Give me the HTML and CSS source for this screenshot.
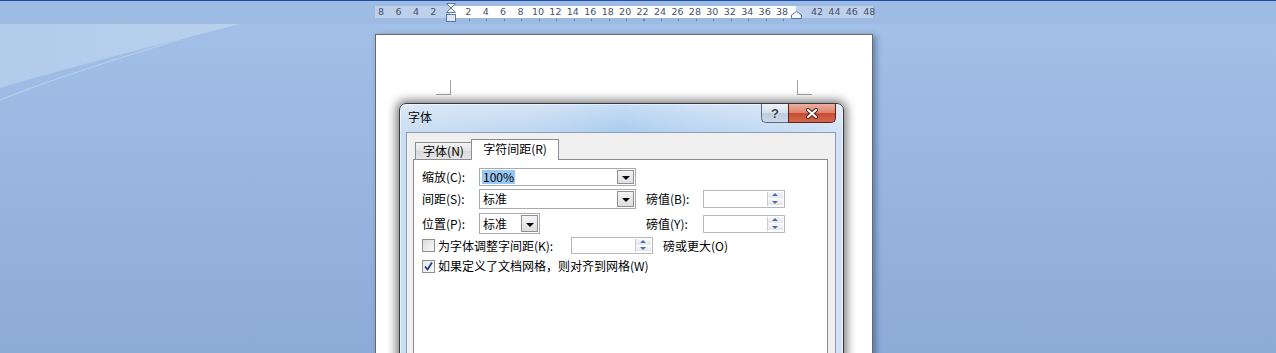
FILE: index.html
```html
<!doctype html>
<html>

<head>
	<meta charset="utf-8">
	<title>字体</title>
	<link rel="stylesheet" href="styles.css">
</head>

<body>
	<div class="topline"></div>

	<!--ルーラー-->
	<div class="rulerband">
		<div class="ruler">
			<div class="scale">
				<span>8</span><span>6</span><span>4</span><span>2</span><span></span>
				<span>2</span><span>4</span><span>6</span><span>8</span><span>10</span>
				<span>12</span><span>14</span><span>16</span><span>18</span><span>20</span>
				<span>22</span><span>24</span><span>26</span><span>28</span><span>30</span>
				<span>32</span><span>34</span><span>36</span><span>38</span><span></span>
				<span>42</span><span>44</span><span>46</span><span>48</span>
			</div>
			<svg class="indent-left" width="11" height="21" viewBox="0 0 11 21">
				<path d="M0.5 0.5 H9.5 L5 5 L9.5 9.5 H0.5 L5 5 Z" fill="#f4f7fc" stroke="#5878aa"/>
				<rect x="0.5" y="11.5" width="9" height="7" fill="#dfe7f4" stroke="#5878aa"/>
			</svg>
			<svg class="indent-right" width="12" height="8" viewBox="0 0 12 8">
				<path d="M0.5 7.5 V4 L5.5 0.5 L10.5 4 V7.5 Z" fill="#f4f7fc" stroke="#5878aa"/>
			</svg>
		</div>
		<div class="ticks"></div>
	</div>

	<div class="workspace">
		<svg class="swoosh" width="260" height="110" viewBox="0 0 260 110">
			<defs>
				<linearGradient id="sw" x1="0" y1="0" x2="1" y2="0">
					<stop offset="0" stop-color="#b2cbea"/>
					<stop offset="1" stop-color="#b8d0ee"/>
				</linearGradient>
			</defs>
			<path d="M0 0 H240 C170 18 80 40 0 64 Z" fill="url(#sw)"/>
			<path d="M188 13 C120 34 60 52 0 76" fill="none" stroke="#b7cfed" stroke-width="1.2" opacity="0.8"/>
		</svg>

		<!--ページ-->
		<div class="page">
			<div class="crops">
				<span class="crop crop-l"></span>
				<span class="crop crop-r"></span>
			</div>
		</div>

		<!--ダイアログ-->
		<div class="dialog">
			<div class="titlebar">
				<div class="title">字体</div>
				<div class="caption-btns">
					<div class="cbtn help">?</div>
					<div class="cbtn close">
						<svg width="14" height="11" viewBox="0 0 14 11">
							<path d="M3 2 L11 9 M11 2 L3 9" stroke="#4a1a12" stroke-width="4" stroke-linecap="round"/>
							<path d="M3 2 L11 9 M11 2 L3 9" stroke="#fff" stroke-width="2.2" stroke-linecap="round"/>
						</svg>
					</div>
				</div>
			</div>

			<div class="client">
				<div class="tabs">
					<div class="tab">字体(N)</div>
					<div class="tab active">字符间距(R)</div>
				</div>
				<div class="tabpage">
					<div class="row r1">
						<span class="label">缩放(C):</span>
						<div class="combo wide h18"><span class="sel">100%</span><span class="dd"></span></div>
					</div>
					<div class="row r2">
						<span class="label">间距(S):</span>
						<div class="slot"><div class="combo wide h20"><span class="val">标准</span><span class="dd"></span></div></div>
						<span class="label">磅值(B):</span>
						<div class="spin h18"><span class="arrows"><i class="up"></i><i class="down"></i></span></div>
					</div>
					<div class="row r3">
						<span class="label">位置(P):</span>
						<div class="slot"><div class="combo narrow h21"><span class="val">标准</span><span class="dd"></span></div></div>
						<span class="label">磅值(Y):</span>
						<div class="spin h18"><span class="arrows"><i class="up"></i><i class="down"></i></span></div>
					</div>
					<div class="row r4">
						<span class="check"></span>
						<span class="ktext">为字体调整字间距(K):</span>
						<div class="spin h17"><span class="arrows"><i class="up"></i><i class="down"></i></span></div>
						<span class="after">磅或更大(O)</span>
					</div>
					<div class="row r5">
						<span class="check on">
							<svg width="11" height="11" viewBox="0 0 11 11">
								<path d="M2 5.5 L4.5 8.5 L9 1.5" fill="none" stroke="#1f3f86" stroke-width="1.8"/>
							</svg>
						</span>
						<span class="ctext">如果定义了文档网格，则对齐到网格(W)</span>
					</div>
				</div>
			</div>
		</div>
	</div>
</body>

</html>
```

FILE: styles.css
```css
body {
	margin: 0;
	width: 1276px;
	height: 353px;
	overflow: hidden;
	background: #9ebce4;
	font-family: "Noto Sans CJK SC", "Noto Sans", sans-serif;
	font-size: 12px;
	color: #000;
}

.topline {
	height: 1px;
	background: #1c4ea6;
}

/* ルーラー */
.rulerband {
	height: 18px;
	padding-top: 5px;
	background: #9ebbe3;
}

.ruler {
	position: relative;
	margin-left: 375px;
	width: 498px;
	height: 12px;
	background: linear-gradient(to right, #bcd0ec 0 75px, #fff 75px 421px, #bcd0ec 421px);
}

.scale {
	display: grid;
	grid-template-columns: repeat(29, 17.45px);
	margin-left: -2.7px;
	height: 12px;
	line-height: 12px;
	font-family: "DejaVu Sans", sans-serif;
	font-size: 9.5px;
	color: #46526a;
	text-align: center;
}

.indent-left {
	position: absolute;
	left: 71px;
	top: -3px;
}

.indent-right {
	position: absolute;
	left: 416px;
	top: 5px;
}

.ticks {
	margin: 1px 0 0 469px;
	width: 316px;
	height: 2px;
	background: repeating-linear-gradient(to right, #6f7b90 0 1px, transparent 1px 17.45px);
}

/* 作業領域 */
.workspace {
	position: relative;
	height: 329px;
	overflow: hidden;
	background: linear-gradient(#a1bfe7, #8dabd7);
}

.swoosh {
	position: absolute;
	left: 0;
	top: 0;
}

.page {
	position: relative;
	box-sizing: border-box;
	margin: 10px 0 0 375px;
	width: 498px;
	height: 340px;
	background: #fff;
	border: 1px solid #6a6a6a;
	box-shadow: 3px 2px 6px rgba(30, 50, 90, 0.45);
}

.crops {
	display: flex;
	justify-content: space-between;
	padding: 45px 60px 0 60px;
}

.crop {
	box-sizing: border-box;
	width: 15px;
	height: 15px;
	border-bottom: 1px solid #a4a4a4;
}

.crop-l {
	border-right: 1px solid #a4a4a4;
}

.crop-r {
	border-left: 1px solid #a4a4a4;
}

/* ダイアログ */
.dialog {
	position: absolute;
	left: 399px;
	top: 79px;
	box-sizing: border-box;
	width: 445px;
	height: 300px;
	border: 1px solid #363a40;
	border-radius: 7px 7px 0 0;
	background:
		linear-gradient(rgba(255, 255, 255, 0.35), rgba(255, 255, 255, 0) 30px),
		linear-gradient(to right, #c9ddf3 0%, #bed6f0 30%, #a9cbee 50%, #b7d3f1 65%, #c4dbf3 85%, #d2e3f5 100%);
	box-shadow: 0 0 10px 3px rgba(0, 0, 0, 0.5), inset 0 0 0 1px rgba(255, 255, 255, 0.55);
}

.titlebar {
	display: flex;
	height: 28px;
	padding: 0 7px 0 8px;
}

.title {
	flex: 1;
	padding-top: 6px;
	line-height: 14px;
}

.caption-btns {
	display: flex;
	align-self: flex-start;
}

.cbtn {
	box-sizing: border-box;
	height: 19px;
	display: flex;
	align-items: center;
	justify-content: center;
}

.help {
	width: 27px;
	border: 1px solid #5a6a82;
	border-top: none;
	border-right: none;
	border-radius: 0 0 0 5px;
	background: linear-gradient(#eef3f9, #d5e0ec 50%, #bccbdd 50%, #cbd8e7);
	font-family: "Liberation Sans", sans-serif;
	font-weight: bold;
	font-size: 13px;
	color: #3a3f48;
	text-shadow: 0 0 2px #fff;
}

.close {
	width: 48px;
	border: 1px solid #5e2218;
	border-top: none;
	border-radius: 0 0 5px 0;
	background: linear-gradient(#eab0a2, #dc826b 50%, #c74a31 50%, #d3694d);
}

.client {
	box-sizing: border-box;
	margin: 0 7px 0 6px;
	height: 280px;
	border: 1px solid #8b9cb3;
	background: #f0f0f0;
}

.tabs {
	display: flex;
	align-items: flex-end;
	height: 20px;
	margin-top: 6px;
	padding-left: 8px;
}

.tab {
	box-sizing: border-box;
	width: 57px;
	height: 17px;
	border: 1px solid #898c95;
	border-bottom: none;
	background: linear-gradient(#f3f3f3, #e3e3e3 50%, #d9d9d9 50%, #e5e5e5);
	text-align: center;
	line-height: 15px;
}

.tab.active {
	position: relative;
	z-index: 1;
	width: 88px;
	height: 21px;
	margin-left: -1px;
	margin-bottom: -1px;
	background: #fff;
	line-height: 18px;
}

.tabpage {
	box-sizing: border-box;
	margin: 0 7px 0 6px;
	height: 240px;
	border: 1px solid #898c95;
	background: #fff;
	padding: 8px 0 0 8px;
}

.row {
	display: flex;
	align-items: center;
	line-height: 14px;
}

.r1 {
	height: 18px;
}

.r2 {
	margin-top: 3px;
	height: 20px;
}

.r3 {
	margin-top: 4px;
	height: 21px;
}

.r4 {
	margin-top: 3px;
	height: 17px;
}

.r5 {
	margin-top: 5px;
	height: 14px;
}

.label {
	width: 57px;
}

.slot {
	width: 167px;
}

.combo {
	box-sizing: border-box;
	display: flex;
	align-items: center;
	border: 1px solid #a7abb0;
	background: #fff;
	padding: 0 1px 0 2px;
}

.combo.wide {
	width: 157px;
}

.combo.narrow {
	width: 61px;
}

.h17 {
	height: 17px;
}

.h18 {
	height: 18px;
}

.h20 {
	height: 20px;
}

.h21 {
	height: 21px;
}

.combo .val {
	flex: 1;
	padding-left: 1px;
}

.sel {
	background: #98c8f2;
	padding: 0 1px;
	margin-right: auto;
}

.dd {
	box-sizing: border-box;
	position: relative;
	width: 17px;
	height: calc(100% - 2px);
	border: 1px solid #8f8f8f;
	background: linear-gradient(#f4f4f4, #dedede);
}

.dd::after {
	content: "";
	position: absolute;
	left: 4px;
	top: calc(50% - 1px);
	border-left: 4px solid transparent;
	border-right: 4px solid transparent;
	border-top: 4px solid #000;
}

.spin {
	box-sizing: border-box;
	display: flex;
	justify-content: flex-end;
	width: 82px;
	border: 1px solid #b5b9be;
	background: #fff;
	padding: 1px;
}

.arrows {
	display: flex;
	flex-direction: column;
	width: 15px;
	border-left: 1px solid #c8ccd2;
}

.arrows i {
	flex: 1;
	position: relative;
	background: linear-gradient(#f6f7f9, #e2e5ea);
	border-bottom: 1px solid #fff;
}

.arrows i::after {
	content: "";
	position: absolute;
	left: 4px;
	border-left: 3px solid transparent;
	border-right: 3px solid transparent;
}

.arrows .up::after {
	top: calc(50% - 2px);
	border-bottom: 3px solid #4a6db0;
}

.arrows .down::after {
	top: calc(50% - 1px);
	border-top: 3px solid #4a6db0;
}

.check {
	box-sizing: border-box;
	display: flex;
	align-items: center;
	justify-content: center;
	width: 13px;
	height: 13px;
	border: 1px solid #8e8f8f;
	background: linear-gradient(135deg, #dcdcdc, #f8f8f8);
	margin-right: 3px;
}

.check.on {
	background: linear-gradient(135deg, #e4e6ea, #fafafa);
}

.ktext {
	width: 133px;
}

.after {
	margin-left: 10px;
}
```
